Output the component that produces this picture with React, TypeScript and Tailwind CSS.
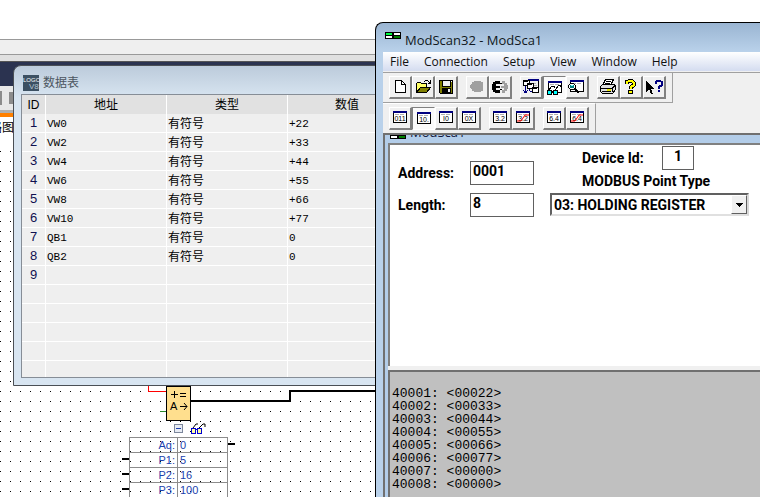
import React, { useState } from 'react';
import clsx from 'clsx';

interface DataRow {
    address: string;
    type: string;
    value: string;
}

const dataRows: DataRow[] = [
    { address: 'VW0', type: '有符号', value: '+22' },
    { address: 'VW2', type: '有符号', value: '+33' },
    { address: 'VW4', type: '有符号', value: '+44' },
    { address: 'VW6', type: '有符号', value: '+55' },
    { address: 'VW8', type: '有符号', value: '+66' },
    { address: 'VW10', type: '有符号', value: '+77' },
    { address: 'QB1', type: '有符号', value: '0' },
    { address: 'QB2', type: '有符号', value: '0' },
];

const ROW_COUNT = 14;

const registers = ['00022', '00033', '00044', '00055', '00066', '00077', '00000', '00000'];

const params = [
    ['Aq:', '0'],
    ['P1:', '5'],
    ['P2:', '16'],
    ['P3:', '100'],
];

/* ---------- toolbar icons ---------- */

const Icon: React.FC<{ children: React.ReactNode }> = ({ children }) => (
    <svg width="18" height="18" viewBox="0 0 18 18" shapeRendering="crispEdges" fill="none" className="shrink-0">
        {children}
    </svg>
);

const NewIcon = () => (
    <Icon>
        <path d="M4.5 2.5h6l4 4v8h-10z" fill="#fff" stroke="#000" />
        <path d="M10.5 2.5v4h4" stroke="#000" />
    </Icon>
);

const OpenIcon = () => (
    <Icon>
        <path d="M2.5 14.5v-9l1-1h3l1 1h5v4h-5z" fill="#ffff66" stroke="#000" />
        <path d="M2.5 14.5l4-5h10l-4 5z" fill="#808000" stroke="#000" />
        <path d="M10 3.5h1M11 2.5h3M14 3.5h1M15 4.5h1M16.5 2v4M14 5.5h3" stroke="#000" />
    </Icon>
);

const SaveIcon = () => (
    <Icon>
        <path d="M2.500 2.500h13v13h-12l-1-1z" fill="#808000" stroke="#000" />
        <path d="M5.500 2.500h8v6h-8z" fill="#f0f0f0" stroke="#000" />
        <path d="M5 10h9v5H5z" fill="#000" />
        <path d="M11 11h2v3h-2z" fill="#f0f0f0" />
        <path d="M14 3h1v1h-1z" fill="#fff" />
    </Icon>
);

const DisconnectIcon = () => (
    <Icon>
        <path d="M6 3h7v1h2v9h-2v1H6v-1H4v-2H3V6h1V4h2z" fill="#a0a0a0" />
        <path d="M2 7h2v3H2z" fill="#a0a0a0" />
    </Icon>
);

const ConnectIcon = () => (
    <Icon>
        <path d="M4 3h5v3H5v2h4v2H5v2h4v3H4v-1H2v-2H1V6h1V4h2z" fill="#000" />
        <path d="M9 5h2v1H9zM9 11h2v1H9z" fill="#000" />
        <path d="M11 3h3v2h2v2h1v4h-1v2h-2v2h-3v-3h2v-2h-3V8h3V6h-2z" fill="#a0a0a0" />
    </Icon>
);

const CascadeIcon = () => (
    <Icon>
        <path d="M6 1h11v2H6z" fill="#000080" />
        <path d="M16.5 3v6" stroke="#000" />
        <path d="M10 5h4M12 7h3" stroke="#b0b0b0" />
        <path d="M1.5 2.5h6v5h-6z" fill="#fff" stroke="#000" />
        <path d="M5.5 5.5h6v5h-6z" fill="#fff" stroke="#000" />
        <path d="M10.5 9.5h6v5h-6z" fill="#fff" stroke="#000" />
        <path d="M1 3h5v1H1zM6 6h4v1H6zM11 10h4v1h-4z" fill="#000" />
        <path d="M3.5 8v7M1.5 12v1M2.5 13v2M5.5 12v1M4.5 13v2M7.5 11v2M8 13.5h2" stroke="#000080" />
    </Icon>
);

const MiniWindow: React.FC<{ children?: React.ReactNode }> = ({ children }) => (
    <Icon>
        <path d="M2.5 2.5h13v11h-13z" fill="#fff" stroke="#000" />
        <path d="M2 2h14v2H2z" fill="#000080" />
        <path d="M4 5.500h4M9 5.500h4" stroke="#b0b0b0" />
        {children}
    </Icon>
);

const WatchIcon = () => (
    <MiniWindow>
        <path d="M3 11l3-4h2v2M9 11l4-5h1v2" stroke="#000" />
        <path d="M1.5 11.5h4v4h-4zM7.5 11.5h4v4h-4z" fill="#00ffff" stroke="#000" />
        <path d="M5 12.5h3" stroke="#000" />
    </MiniWindow>
);

const ZoomIcon = () => (
    <MiniWindow>
        <path d="M2.5 5.500h3l2 2v2l-2 2h-3l-2-2v-2z" fill="#fff" stroke="#000" />
        <path d="M2 7h4v3H2z" fill="#008080" />
        <path d="M3 7h2v1H3z" fill="#80ffff" />
        <path d="M6 10h2v1h1v1h1v1h1v2H9v-1H8v-1H7v-1H6z" fill="#000" />
    </MiniWindow>
);

const PrintIcon = () => (
    <Icon>
        <path d="M6.5 1.5h8l-3 6h-8z" fill="#fff" stroke="#000" />
        <path d="M7 3.5h5M6 5.5h5" stroke="#000" />
        <path d="M1.5 8.5l2-2h11l2 1v4l-3 4h-10l-2-2z" fill="#e0e0e0" stroke="#000" />
        <path d="M2 10.500h11l3-3M13.500 10v4M3 13.500h9" stroke="#000" />
        <path d="M8 11h4v2H8z" fill="#e8e800" />
    </Icon>
);

const AboutIcon = () => (
    <Icon>
        <path d="M5 6V4l2-1h3l2 2v2l-3 2v2" stroke="#000" strokeWidth="4" />
        <path d="M6 12h5v4H6z" fill="#000" />
        <path d="M5 6V4l2-1h3l2 2v2l-3 2v2" stroke="#ffff00" strokeWidth="2" />
        <path d="M7 13h3v2H7z" fill="#ffff00" />
    </Icon>
);

const ContextHelpIcon = () => (
    <Icon>
        <path d="M1 3v11l3-3 2 5h2l-2-5h4z" fill="#000" />
        <path d="M11 6V4l1-1h3l2 1v3l-3 2v2" stroke="#000080" strokeWidth="2" />
        <path d="M13 12h2v2h-2z" fill="#000080" />
    </Icon>
);

const FormatIcon: React.FC<{ text: string; swapped?: boolean }> = ({ text, swapped }) => (
    <MiniWindow>
        <text x="9" y="12" textAnchor="middle" fontSize="7" fill="#000" stroke="none" fontFamily="Liberation Sans, sans-serif">
            {text}
        </text>
        {swapped && <path d="M3 12h4l4-6h4" stroke="#f00" strokeWidth="1" shapeRendering="auto" />}
    </MiniWindow>
);

const ModScanLogo = () => (
    <svg width="16" height="7" viewBox="0 0 16 7" shapeRendering="crispEdges">
        <path d="M0 0h16v7H0z" fill="#000" />
        <path d="M1 1h6v2H1z" fill="#00ff40" />
        <path d="M9 1h6v2H9zM1 4h6v2H1z" fill="#fff" />
        <path d="M9 4h6v2H9z" fill="#008000" />
    </svg>
);

/* ---------- toolbars ---------- */

interface ToolButtonProps {
    label: string;
    pressed?: boolean;
    children: React.ReactNode;
}

const ToolButton: React.FC<ToolButtonProps> = ({ label, pressed, children }) => (
    <button
        type="button"
        aria-label={label}
        aria-pressed={pressed}
        className={clsx(
            'flex h-[23px] w-[23px] items-center justify-center border',
            pressed
                ? 'border-t-[#808080] border-l-[#808080] border-r-white border-b-white bg-[#fafafa] pt-px pl-px'
                : 'border-t-white border-l-white border-r-2 border-b-2 border-r-[#808080] border-b-[#808080] bg-[#f0f0f0]'
        )}
    >
        {children}
    </button>
);

const ToolGroup: React.FC<{ children: React.ReactNode }> = ({ children }) => <div className="flex">{children}</div>;

const Toolbars = () => (
    <div className="flex flex-col items-start bg-[#f0f0f0]">
        <div className="flex h-[30px] items-center gap-2 border-r border-b border-[#a0a0a0] px-1.5">
            <ToolGroup>
                <ToolButton label="New"><NewIcon /></ToolButton>
                <ToolButton label="Open"><OpenIcon /></ToolButton>
                <ToolButton label="Save"><SaveIcon /></ToolButton>
            </ToolGroup>
            <ToolGroup>
                <ToolButton label="Disconnect"><DisconnectIcon /></ToolButton>
                <ToolButton label="Connect"><ConnectIcon /></ToolButton>
            </ToolGroup>
            <ToolGroup>
                <ToolButton label="Data definition"><CascadeIcon /></ToolButton>
                <ToolButton label="Show data" pressed><WatchIcon /></ToolButton>
                <ToolButton label="Show traffic"><ZoomIcon /></ToolButton>
            </ToolGroup>
            <ToolGroup>
                <ToolButton label="Print"><PrintIcon /></ToolButton>
                <ToolButton label="About"><AboutIcon /></ToolButton>
                <ToolButton label="Context help"><ContextHelpIcon /></ToolButton>
            </ToolGroup>
        </div>
        <div className="flex h-[30px] items-center gap-2 border-t border-r border-t-white border-r-[#a0a0a0] px-1.5">
            <ToolGroup>
                <ToolButton label="Binary"><FormatIcon text="011" /></ToolButton>
                <ToolButton label="Decimal" pressed><FormatIcon text="10." /></ToolButton>
                <ToolButton label="Integer"><FormatIcon text="I0" /></ToolButton>
                <ToolButton label="Hex"><FormatIcon text="0X" /></ToolButton>
            </ToolGroup>
            <ToolGroup>
                <ToolButton label="Float 32"><FormatIcon text="3.2" /></ToolButton>
                <ToolButton label="Float 32 swapped"><FormatIcon text="3.2" swapped /></ToolButton>
            </ToolGroup>
            <ToolGroup>
                <ToolButton label="Float 64"><FormatIcon text="6.4" /></ToolButton>
                <ToolButton label="Float 64 swapped"><FormatIcon text="6.4" swapped /></ToolButton>
            </ToolGroup>
        </div>
    </div>
);

/* ---------- LOGO! editor behind the windows ---------- */

const Diagram = () => (
    <div className="relative flex-1 overflow-hidden">
        <svg className="absolute inset-0 h-full w-full" shapeRendering="crispEdges" fill="none">
            <defs>
                <pattern id="dots" width="10" height="10" patternUnits="userSpaceOnUse">
                    <rect x="0" y="6" width="1" height="1" fill="#000" />
                </pattern>
            </defs>
            <rect width="100%" height="100%" fill="url(#dots)" />
            <path d="M148.500 230v16.500h18" stroke="#f00" />
            <path d="M160 266.500h7" stroke="#2a8a2a" />
            <path d="M191 256h99v-10h100" stroke="#000" strokeWidth="2" />
            <rect x="166.500" y="241.500" width="24" height="34" fill="#ffdf8e" stroke="#000" />
            <path d="M171 249.500h7M174.500 246v7M180 248.500h6M180 251.500h6" stroke="#000" />
            <text x="170" y="265" fontSize="11" fill="#000" fontFamily="Liberation Sans, sans-serif">A</text>
            <path d="M180 261.500h7M184 258l3 3.500-3 3.500" stroke="#000" shapeRendering="auto" />
            <rect x="174.500" y="279.500" width="8" height="8" fill="#e8ecf4" stroke="#7c879c" />
            <path d="M176 283.500h5" stroke="#1c3fae" />
            <path d="M193 283l3-4h2M199 283l4-4h2v3" stroke="#000" shapeRendering="auto" />
            <path d="M191.500 283.500h4v5h-4zM197.500 283.500h4v5h-4z" fill="#ffffa0" stroke="#0000d0" />
            <path d="M195 284.500h3" stroke="#0000d0" />
            <path d="M228 299h7M122 314h7M122 329h7M122 344h7" stroke="#000" strokeWidth="2" />
        </svg>
        <table className="absolute top-[292px] left-[129px] w-[99px] table-fixed border-collapse text-[11px] leading-[14px] text-[#1c3fae]">
            <tbody>
                {params.map(([name, value]) => (
                    <tr key={name} className="h-[15px]">
                        <th scope="row" className="w-12 border border-[#8c8c8c] p-0 pr-0.5 text-right font-normal">{name}</th>
                        <td className="border border-[#8c8c8c] p-0 pl-0.5">{value}</td>
                    </tr>
                ))}
            </tbody>
        </table>
    </div>
);

const Editor = () => (
    <div className="flex h-full flex-col bg-white">
        <div className="h-[39px]" />
        <div className="h-4 border-y border-[#999999] bg-[#efefef]" />
        <div className="h-1.5 bg-[#e0e0e0]" />
        <div className="h-[25px] border-t border-[#555555] bg-[#2b3350]" />
        <div className="flex h-6 items-center gap-[7px] bg-[#e8e8e8]">
            <div className="h-3.5 w-0.5 bg-[#8c8c8c]" />
            <div className="h-3 w-3 bg-[#8c8c8c]" />
        </div>
        <div className="h-[3px] bg-[#b0b0b0]" />
        <div className="h-1 bg-[#ff8000]" />
        <div className="-ml-2.5 flex h-7 items-center pb-1.5 text-xs text-black">路图</div>
        <Diagram />
    </div>
);

/* ---------- data table window ---------- */

const DataTableWindow = () => (
    <section className="absolute top-[65px] left-[13px] w-[402px] rounded-tl-lg border border-[#4a4f55] bg-[#d8e5f1] bg-linear-to-b from-[#bccbdb] to-[#d8e5f1] to-10% px-[7px] pb-[7px]">
        <header className="flex h-7 items-center gap-1 pt-1.5 pl-0.5">
            <svg width="16" height="16" viewBox="0 0 16 16">
                <rect width="16" height="16" fill="#3c5062" />
                <text x="0" y="7" fontSize="6" fill="#fff" fontFamily="Liberation Sans, sans-serif">LOGO</text>
                <text x="6" y="14" fontSize="8" fill="#b4c4d0" fontFamily="Liberation Sans, sans-serif">V8</text>
            </svg>
            <h2 className="text-xs text-[#4c5560]">数据表</h2>
        </header>
        <div className="h-[284px] overflow-hidden border border-[#868d96] bg-[#efefef]">
            <table className="w-full table-fixed border-separate border-spacing-0 text-xs text-black">
                <thead>
                    <tr className="h-[19px] bg-[#e1e1e1]">
                        <th className="w-6 border-r border-white p-0 font-normal">ID</th>
                        <th className="w-[121px] border-r border-white p-0 font-normal">地址</th>
                        <th className="w-[121px] border-r border-white p-0 font-normal">类型</th>
                        <th className="p-0 font-normal">数值</th>
                    </tr>
                </thead>
                <tbody>
                    {Array.from({ length: ROW_COUNT }, (_, i) => {
                        const row = dataRows[i];
                        return (
                            <tr key={i} className="h-[19px] leading-4">
                                <td className="border-r border-b border-white p-0 text-center text-[13px] text-[#101050]">{i < 9 ? i + 1 : ''}</td>
                                <td className="border-r border-b border-white p-0 pt-0.5 pl-px font-['Liberation_Mono',monospace] text-[11px]">{row?.address}</td>
                                <td className="border-r border-b border-white p-0 pt-0.5 pl-px">{row?.type}</td>
                                <td className="border-b border-white p-0 pt-0.5 pl-px font-['Liberation_Mono',monospace] text-[11px]">{row?.value}</td>
                            </tr>
                        );
                    })}
                </tbody>
            </table>
        </div>
    </section>
);

/* ---------- ModScan32 window ---------- */

const inputClass = 'h-6 border border-[#606060] bg-white px-0.5 pb-1 outline-none';

const PointForm = () => {
    const [address, setAddress] = useState('0001');
    const [length, setLength] = useState('8');
    const [deviceId, setDeviceId] = useState('1');

    return (
        <form className="flex h-[223px] items-start gap-4 border-t-2 border-l-2 border-[#808080] bg-white pl-2 font-['Roboto','Liberation_Sans',sans-serif] text-sm font-bold text-black">
            <div className="flex flex-col gap-2 pt-4">
                <div className="flex items-center">
                    <label htmlFor="address" className="w-18">Address:</label>
                    <input id="address" className={clsx(inputClass, 'w-16')} value={address} onChange={e => setAddress(e.target.value)} />
                </div>
                <div className="flex items-center">
                    <label htmlFor="length" className="w-18">Length:</label>
                    <input id="length" className={clsx(inputClass, 'w-16')} value={length} onChange={e => setLength(e.target.value)} />
                </div>
            </div>
            <div className="flex flex-col pt-px">
                <div className="flex items-center pl-8">
                    <label htmlFor="device" className="w-20">Device Id:</label>
                    <input id="device" className={clsx(inputClass, 'w-8 text-center')} value={deviceId} onChange={e => setDeviceId(e.target.value)} />
                </div>
                <label htmlFor="point-type" className="h-[23px] pl-8 leading-[23px]">MODBUS Point Type</label>
                <div className="relative">
                    <select
                        id="point-type"
                        className="h-[23px] w-[199px] appearance-none border-2 border-t-[#606060] border-l-[#606060] border-r-[#d8d8d8] border-b-[#e0e0e0] bg-white pl-0.5 outline-none"
                    >
                        <option>03: HOLDING REGISTER</option>
                    </select>
                    <span className="pointer-events-none absolute top-0.5 right-0.5 flex h-[19px] w-4 items-center justify-center border border-t-white border-l-white border-r-[#606060] border-b-[#606060] bg-[#f0f0f0]">
                        <svg width="7" height="4" viewBox="0 0 7 4" shapeRendering="crispEdges">
                            <path d="M0 0h7v1H0zM1 1h5v1H1zM2 2h3v1H2zM3 3h1v1H3z" fill="#000" />
                        </svg>
                    </span>
                </div>
            </div>
        </form>
    );
};

const ModScanWindow = () => (
    <section className="absolute top-[22px] right-0 bottom-0 left-[375px] flex flex-col overflow-hidden rounded-tl-lg border-t border-l border-black bg-[#b9d1ea] bg-linear-to-b from-[#9ab5d2] to-[#b9d1ea] to-6% pl-[7px] font-['Open_Sans','Noto_Sans',sans-serif]">
        <header className="flex h-[29px] shrink-0 items-center gap-1 pl-0.5">
            <div className="pb-1">
                <ModScanLogo />
            </div>
            <h1 className="pt-1.5 text-[13px] text-[#101820]">ModScan32 - ModSca1</h1>
        </header>
        <nav className="flex h-[19px] shrink-0 items-center gap-[15px] bg-linear-to-b from-white to-[#d4dcf0] pl-[7px] text-xs leading-[19px] text-[#101010]">
            <button type="button">File</button>
            <button type="button">Connection</button>
            <button type="button">Setup</button>
            <button type="button">View</button>
            <button type="button">Window</button>
            <button type="button">Help</button>
        </nav>
        <div className="h-0.5 shrink-0 border-b border-[#a0a0a0] bg-[#f0f0f0]" />
        <Toolbars />
        <div className="flex min-h-0 flex-1 flex-col border-t-2 border-l-2 border-[#707070] bg-[#b3cde9] pl-[3px]">
            <div className="flex h-2 shrink-0 items-end gap-1 overflow-hidden pb-1 pl-0.5">
                <ModScanLogo />
                <h2 className="text-[13px] leading-[13px] text-[#101840]">ModSca1</h2>
            </div>
            <PointForm />
            <div className="h-1 shrink-0 bg-[#f0f0f0]" />
            <pre className="flex-1 border-t-2 border-l-2 border-[#707070] bg-[#c0c0c0] pt-[15px] pl-0.5 font-['Liberation_Mono',monospace] text-[13px] leading-[13px] text-black">
                {registers.map((value, i) => `${40001 + i}: <${value}>`).join('\n')}
            </pre>
        </div>
    </section>
);

export default function App() {
    return (
        <main className="relative h-screen overflow-hidden bg-white font-['Liberation_Sans','Noto_Sans_CJK_SC',sans-serif]">
            <Editor />
            <DataTableWindow />
            <ModScanWindow />
        </main>
    );
}
